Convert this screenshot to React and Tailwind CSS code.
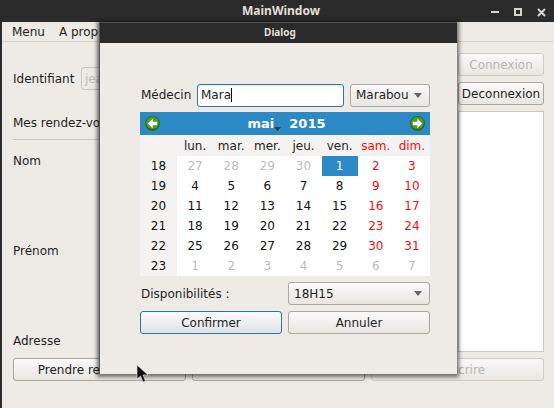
const weekdays = [
  { label: "lun." },
  { label: "mar." },
  { label: "mer." },
  { label: "jeu." },
  { label: "ven." },
  { label: "sam.", red: true },
  { label: "dim.", red: true },
];

const weeks = [
  { n: 18, days: [27, 28, 29, 30, 1, 2, 3], muted: [0, 1, 2, 3] },
  { n: 19, days: [4, 5, 6, 7, 8, 9, 10], muted: [] },
  { n: 20, days: [11, 12, 13, 14, 15, 16, 17], muted: [] },
  { n: 21, days: [18, 19, 20, 21, 22, 23, 24], muted: [] },
  { n: 22, days: [25, 26, 27, 28, 29, 30, 31], muted: [] },
  { n: 23, days: [1, 2, 3, 4, 5, 6, 7], muted: [0, 1, 2, 3, 4, 5, 6] },
];

function Button({ children, disabled, className = "" }) {
  return (
    <div
      className={`flex items-center justify-center rounded-[3px] border bg-gradient-to-b from-[#fbfaf9] to-[#e9e6e2] ${
        disabled ? "border-[#d0cdc8] text-[#b9b6b2]" : "border-[#aaa7a2] text-[#1e1e1e]"
      } ${className}`}
    >
      {children}
    </div>
  );
}

function ComboArrow() {
  return (
    <svg width="10" height="5" viewBox="0 0 10 5">
      <path d="M1 0h8L5 5z" fill="#666" />
    </svg>
  );
}

function NavArrow({ right }) {
  return (
    <svg width="15" height="15" viewBox="0 0 14 14">
      <circle cx="7" cy="7" r="7" fill="#2a6f18" />
      <circle cx="7" cy="6.4" r="5.8" fill="#4f9a2e" />
      <path
        d={right ? "M2.6 5.4h4.2V2.6L11.6 7l-4.8 4.4V8.6H2.6z" : "M11.4 5.4H7.2V2.6L2.4 7l4.8 4.4V8.6h4.2z"}
        fill="#fff"
      />
    </svg>
  );
}

function Calendar() {
  return (
    <div className="flex flex-col">
      <div className="flex h-[23px] items-center justify-between bg-[#2d89c6] px-[5px]">
        <NavArrow />
        <div className="flex items-center pl-[3px] text-[13px] font-bold text-white">
          <span>mai</span>
          <svg className="mt-[11px]" width="7" height="4" viewBox="0 0 7 4">
            <path d="M0 0h7L3.5 4z" fill="#2b3a44" />
          </svg>
          <span className="ml-[8px]">2015</span>
        </div>
        <NavArrow right />
      </div>
      <div className="flex h-[21px] items-center bg-[#f5f3f1]">
        <div className="w-[37px]" />
        {weekdays.map((d) => (
          <div key={d.label} className={`flex-1 text-center ${d.red ? "text-[#fa0a0a]" : "text-[#222]"}`}>
            {d.label}
          </div>
        ))}
      </div>
      {weeks.map((w) => (
        <div key={w.n} className="flex h-5 items-center">
          <div className="flex h-full w-[37px] items-center justify-center bg-[#f5f3f1] text-[#111]">{w.n}</div>
          {w.days.map((d, i) => {
            const selected = w.n === 18 && d === 1;
            const muted = w.muted.includes(i);
            let color = "bg-white text-[#111]";
            if (muted) color = "bg-white text-[#bdbdbd]";
            else if (i > 4) color = "bg-white text-[#fa0a0a]";
            if (selected) color = "bg-[#2d89c6] text-white";
            return (
              <div key={i} className={`flex h-full flex-1 items-center justify-center ${color}`}>
                {d}
              </div>
            );
          })}
        </div>
      ))}
    </div>
  );
}

function Dialog() {
  return (
    <div className="absolute left-[99px] top-[22px] flex h-[352px] w-[358px] flex-col border-l border-[#555] bg-[#eeebe7] shadow-[0_1px_4px_2px_rgba(0,0,0,0.55)]">
      <div className="flex h-[21px] shrink-0 items-center justify-center border-t border-[#555] bg-[#2b2b2b] pb-[2px] pl-[3px] text-[10px] font-bold text-[#e4dfd8] [font-family:'Noto_Sans',sans-serif]">
        Dialog
      </div>
      <div className="flex flex-col pl-[40px] pr-[27px] pt-[41px]">
        <div className="flex h-[23px] items-center">
          <span className="w-[57px] shrink-0 pb-[1px] pl-[1px]">Médecin</span>
          <div className="flex h-[23px] w-[147px] shrink-0 items-center rounded-[3px] border border-[#2d77a8] bg-white pb-[1px] pl-[3px] shadow-[inset_0_1px_1px_rgba(0,0,0,0.1)]">
            Mara
            <span className="h-[14px] w-px bg-black" />
          </div>
          <Button className="ml-[6px] h-[23px] flex-1 justify-between! pb-[1px] pl-[5px] pr-[6px]">
            <span>Marabou</span>
            <ComboArrow />
          </Button>
        </div>
        <div className="mt-[5px]">
          <Calendar />
        </div>
        <div className="mt-[6px] flex h-[23px] items-center">
          <span className="w-[148px] pl-[1px]">Disponibilités :</span>
          <Button className="h-[23px] flex-1 justify-between! pl-[5px] pr-[6px]">
            <span>18H15</span>
            <ComboArrow />
          </Button>
        </div>
        <div className="mt-[6px] flex gap-[6px]">
          <Button className="h-[23px] flex-1 border-[#2d77a8]! to-[#dfe4e8]!">Confirmer</Button>
          <Button className="h-[23px] flex-1">Annuler</Button>
        </div>
      </div>
    </div>
  );
}

export default function App() {
  return (
    <div className="relative flex h-[408px] w-[554px] flex-col overflow-hidden bg-[#eeebe7] text-[12px] text-[#1e1e1e] [font-family:'DejaVu_Sans',sans-serif]">
      <div className="flex h-[22px] shrink-0 items-center bg-[#2b2b2b]">
        <div className="flex-1 pl-[84px] text-center text-[12px] font-bold text-[#e4dfd8] [font-family:'Noto_Sans',sans-serif]">
          MainWindow
        </div>
        <div className="flex w-[76px] items-center gap-[15px] pl-[13px] pt-[2px]">
          <span className="h-[2px] w-[8px] bg-[#d8d4ce]" />
          <span className="h-[8px] w-[8px] border-2 border-[#d8d4ce]" />
          <svg width="9" height="9" viewBox="0 0 9 9">
            <path d="M1 1l7 7M8 1L1 8" stroke="#d8d4ce" strokeWidth="2" />
          </svg>
        </div>
      </div>

      <div className="flex flex-1 flex-col border-l-2 border-[#2b2b2b]">
        <div className="flex h-[20px] shrink-0 items-center gap-[14px] border-b border-[#d6d3ce] pl-[10px]">
          <span>Menu</span>
          <span>A propos</span>
        </div>

        <div className="flex flex-1 flex-col pb-[27px] pl-[11px] pr-[10px] pt-[11px]">
          <div className="flex flex-1 gap-[6px]">
            <div className="flex flex-1 flex-col">
              <div className="mt-[14px] flex h-[23px] items-center">
                <span className="w-[68px] pt-[1px]">Identifiant</span>
                <div className="flex h-[23px] flex-1 items-center rounded-[3px] border border-[#c9c6c1] px-[3px] text-[#bdbab6]">
                  jean
                </div>
              </div>
              <div className="mt-[21px] flex h-[23px] items-center">Mes rendez-vous</div>
              <div className="mt-[5px] h-px bg-[#c9c6c1]" />
              <div className="mt-[14px] leading-[15px]">Nom</div>
              <div className="mt-[75px] leading-[15px]">Prénom</div>
              <div className="mt-[75px] leading-[15px]">Adresse</div>
            </div>
            <div className="flex w-[86px] flex-col">
              <Button disabled className="h-[23px]">
                Connexion
              </Button>
              <Button className="mt-[6px] h-[23px] whitespace-nowrap">Deconnexion</Button>
              <div className="mt-[6px] flex-1 border border-[#c9c6c1] bg-white" />
            </div>
          </div>
          <div className="mt-[6px] flex gap-[6px]">
            <Button className="h-[23px] flex-1">Prendre rendez-vous</Button>
            <Button className="h-[23px] flex-1">Modifier</Button>
            <Button disabled className="h-[23px] flex-1">
              S'inscrire
            </Button>
          </div>
        </div>
      </div>

      <Dialog />

      {/* mouse cursor */}
      <svg className="absolute left-[136px] top-[364px]" width="14" height="20" viewBox="0 0 14 20">
        <path d="M1 1v14l3.5-3 2.5 6 2.5-1-2.5-6h5z" fill="#111" stroke="#eee" strokeWidth="0.6" />
      </svg>
    </div>
  );
}
